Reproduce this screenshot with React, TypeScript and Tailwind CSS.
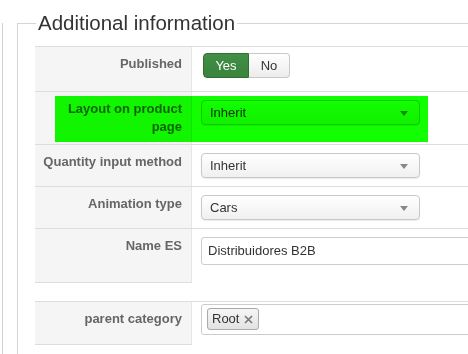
import React from 'react';

function Caret() {
  return (
    <span className="absolute right-[11px] top-[10px] h-0 w-0 border-x-[4px] border-t-[5px] border-x-transparent border-t-[#888]" />
  );
}

function Select({ value }: { value: string }) {
  return (
    <div className="relative h-[25px] w-[219px] rounded-[4px] border border-[#c8c8c8] bg-linear-to-b from-white to-[#f0f0f0] shadow-[0_1px_1px_rgba(0,0,0,0.08)]">
      <span className="block pl-[8px] text-[13px] leading-[23px] text-[#333]">{value}</span>
      <Caret />
    </div>
  );
}

function Row({
  label,
  height,
  children,
  pad = 'pt-[8px]',
  labelBottom = false,
}: {
  label: React.ReactNode;
  height: string;
  children: React.ReactNode;
  pad?: string;
  labelBottom?: boolean;
}) {
  return (
    <div className={`flex border-t border-[#ddd] ${height}`}>
      <div
        className={`w-[157px] shrink-0 border-r border-[#e6e6e6] bg-[#f5f5f5] pr-[9px] pt-[8px] text-right text-[13px] font-bold leading-[18px] text-[#666] ${
          labelBottom ? 'border-b border-b-[#ddd]' : ''
        }`}
      >
        {label}
      </div>
      <div className={`flex-1 pl-[9px] ${pad}`}>{children}</div>
    </div>
  );
}

export default function App() {
  return (
    <div className="relative h-[354px] w-[468px] overflow-hidden bg-white font-['Liberation_Sans',Arial,sans-serif]">
      <div className="ml-[2px] h-full border-l border-[#d0d0d0] pl-[14px]">
        <div className="mt-[23px] h-full border-l border-t border-[#d5d5d5] pl-[17px]">
          <div className="-mt-[14px] ml-[1px] w-fit bg-white px-[2px] text-[20.5px] leading-[26px] text-[#333]">
            Additional information
          </div>

          <div className="mt-[10px] w-[460px]">
            <Row label="Published" height="h-[45px]" pad="pt-[6px]">
              <div className="ml-[2px] flex h-[25px] w-fit text-[13px] leading-[23px]">
                <div className="w-[46px] rounded-l-[4px] border border-[#2f7032] bg-linear-to-b from-[#438f47] to-[#39833d] text-center text-white">
                  Yes
                </div>
                <div className="w-[41px] rounded-r-[4px] border border-l-0 border-[#c8c8c8] bg-linear-to-b from-white to-[#ececec] text-center text-[#333]">
                  No
                </div>
              </div>
            </Row>

            <Row
              label={
                <>
                  Layout on product
                  <br />
                  page
                </>
              }
              height="h-[53px]"
            >
              <Select value="Inherit" />
            </Row>

            <Row label="Quantity input method" height="h-[42px]">
              <Select value="Inherit" />
            </Row>

            <Row label="Animation type" height="h-[42px]">
              <Select value="Cars" />
            </Row>

            <Row label="Name ES" height="h-[55px]" labelBottom>
              <div className="h-[28px] w-[300px] rounded-[3px] border border-[#ccc] bg-white pl-[6px] text-[13px] leading-[26px] text-[#333]">
                Distribuidores B2B
              </div>
            </Row>

            <div className="mt-[18px]">
              <Row label="parent category" height="h-[44px]" pad="pt-[2px]" labelBottom>
                <div className="h-[31px] w-[300px] rounded-[3px] border border-[#ccc] bg-white pl-[5px] pt-[3px]">
                  <div className="flex h-[22px] w-fit items-center gap-[5px] rounded-[3px] border border-[#aaa] bg-linear-to-b from-[#f6f6f6] to-[#e2e2e2] pl-[4px] pr-[5px] text-[13px] text-[#333]">
                    <span>Root</span>
                    <svg width="9" height="9" viewBox="0 0 9 9" className="mt-[1px]">
                      <path d="M1 1 L8 8 M8 1 L1 8" stroke="#777" strokeWidth="1.6" />
                    </svg>
                  </div>
                </div>
              </Row>
            </div>
          </div>
        </div>
      </div>

      <div className="pointer-events-none absolute left-[55px] top-[96px] h-[46px] w-[373px] bg-[#11ff00] mix-blend-multiply" />
    </div>
  );
}
